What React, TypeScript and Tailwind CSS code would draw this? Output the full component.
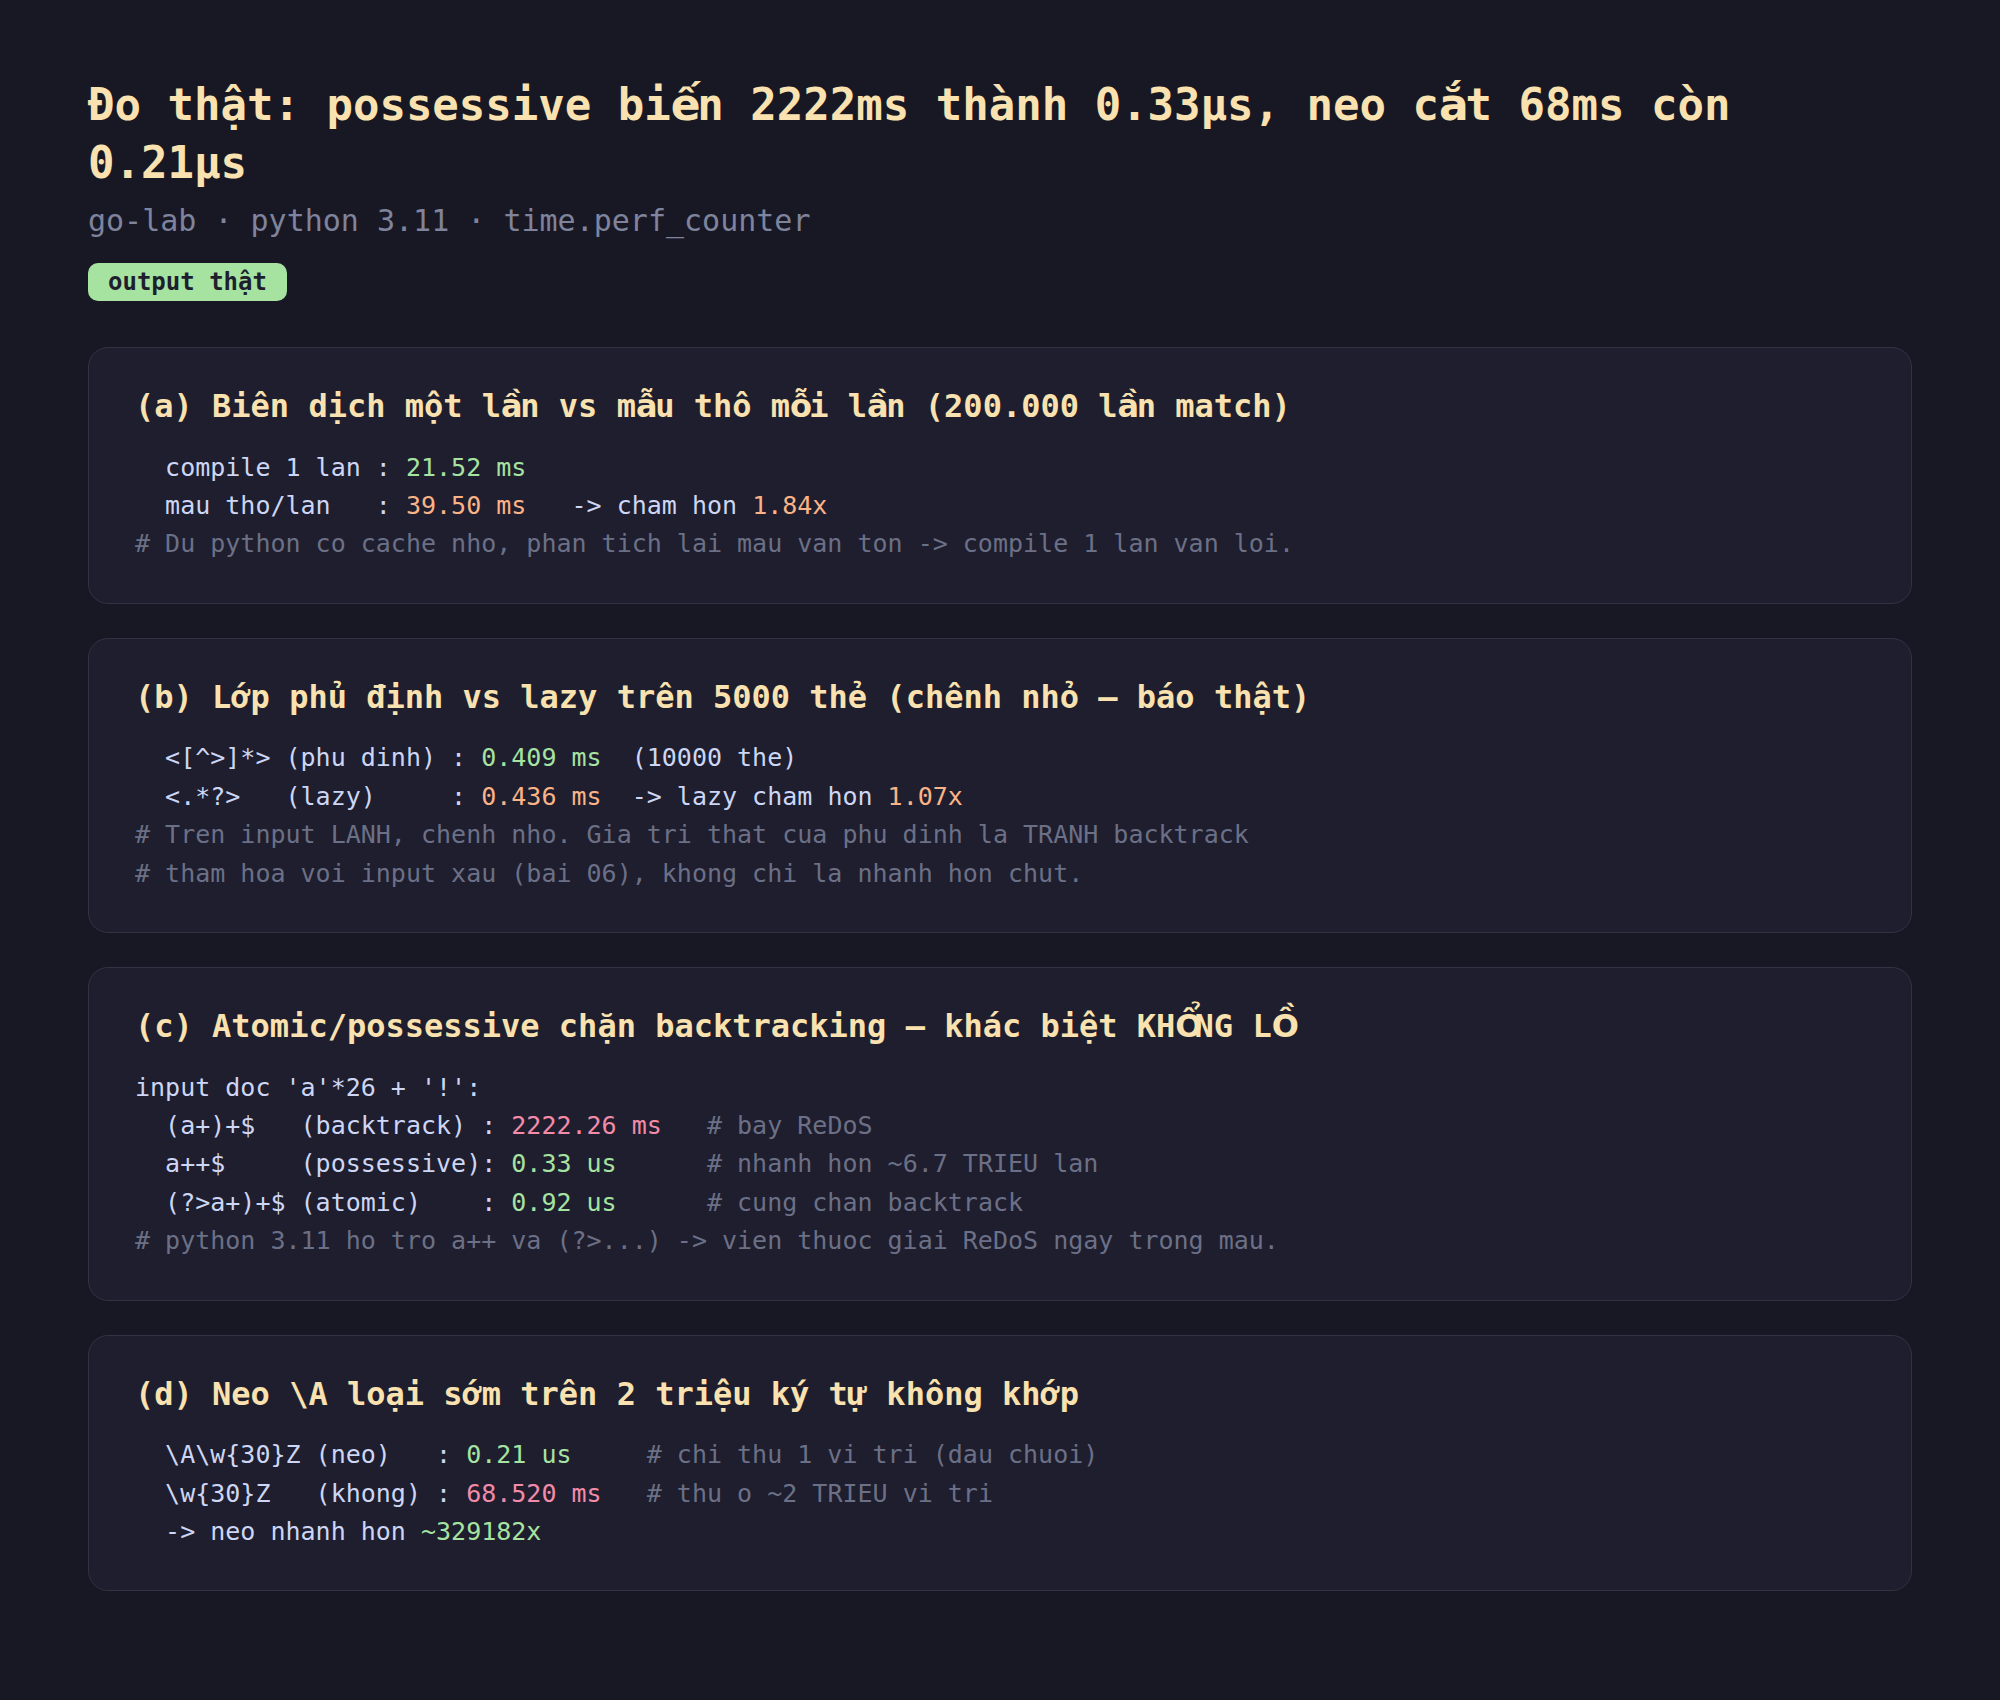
const mono = { fontFamily: '"DejaVu Sans Mono", "Liberation Mono", monospace' }

// DejaVu Sans Mono has no precomposed glyph for these double-accent letters,
// so they get the proportional DejaVu face, kept on the mono grid
const fallbackChars = /([\u1EA4-\u1EAB\u1EAE-\u1EB5\u1EBE-\u1EC5\u1ED0-\u1ED7])/

const Viet = ({ text }: { text: string }) => (
  <>
    {text.split(fallbackChars).map((part, i) =>
      fallbackChars.test(part) ? (
        <span key={i} className="inline-block w-[0.602em] text-center font-['DejaVu_Sans',sans-serif]">
          {part}
        </span>
      ) : (
        part
      )
    )}
  </>
)

type Seg = { t: string; c?: "g" | "o" | "r" | "m" }

const segColor = (c?: string) => {
  switch (c) {
    case "g":
      return "text-[#a6e3a1]" // fast / good
    case "o":
      return "text-[#fab387]" // slower
    case "r":
      return "text-[#f38ba8]" // very slow
    case "m":
      return "text-[#6c7086]" // comment
    default:
      return "text-[#cdd6f4]"
  }
}

const sections: { title: string; lines: Seg[][] }[] = [
  {
    title: "(a) Biên dịch một lần vs mẫu thô mỗi lần (200.000 lần match)",
    lines: [
      [{ t: "  compile 1 lan : " }, { t: "21.52 ms", c: "g" }],
      [{ t: "  mau tho/lan   : " }, { t: "39.50 ms", c: "o" }, { t: "   -> cham hon " }, { t: "1.84x", c: "o" }],
      [{ t: "# Du python co cache nho, phan tich lai mau van ton -> compile 1 lan van loi.", c: "m" }],
    ],
  },
  {
    title: "(b) Lớp phủ định vs lazy trên 5000 thẻ (chênh nhỏ — báo thật)",
    lines: [
      [{ t: "  <[^>]*> (phu dinh) : " }, { t: "0.409 ms", c: "g" }, { t: "  (10000 the)" }],
      [{ t: "  <.*?>   (lazy)     : " }, { t: "0.436 ms", c: "o" }, { t: "  -> lazy cham hon " }, { t: "1.07x", c: "o" }],
      [{ t: "# Tren input LANH, chenh nho. Gia tri that cua phu dinh la TRANH backtrack", c: "m" }],
      [{ t: "# tham hoa voi input xau (bai 06), khong chi la nhanh hon chut.", c: "m" }],
    ],
  },
  {
    title: "(c) Atomic/possessive chặn backtracking — khác biệt KHỔNG LỒ",
    lines: [
      [{ t: "input doc 'a'*26 + '!':" }],
      [{ t: "  (a+)+$   (backtrack) : " }, { t: "2222.26 ms", c: "r" }, { t: "   # bay ReDoS", c: "m" }],
      [{ t: "  a++$     (possessive): " }, { t: "0.33 us", c: "g" }, { t: "      # nhanh hon ~6.7 TRIEU lan", c: "m" }],
      [{ t: "  (?>a+)+$ (atomic)    : " }, { t: "0.92 us", c: "g" }, { t: "      # cung chan backtrack", c: "m" }],
      [{ t: "# python 3.11 ho tro a++ va (?>...) -> vien thuoc giai ReDoS ngay trong mau.", c: "m" }],
    ],
  },
  {
    title: "(d) Neo \\A loại sớm trên 2 triệu ký tự không khớp",
    lines: [
      [{ t: "  \\A\\w{30}Z (neo)   : " }, { t: "0.21 us", c: "g" }, { t: "     # chi thu 1 vi tri (dau chuoi)", c: "m" }],
      [{ t: "  \\w{30}Z   (khong) : " }, { t: "68.520 ms", c: "r" }, { t: "   # thu o ~2 TRIEU vi tri", c: "m" }],
      [{ t: "  -> neo nhanh hon " }, { t: "~329182x", c: "g" }],
    ],
  },
]

export default function App() {
  return (
    <div className="min-h-screen bg-[#181825] px-[88px] pt-[76px] pb-[100px]" style={mono}>
      <h1 className="text-[44px] font-bold leading-[58px] text-[#f9e2af]">
        <Viet text="Đo thật: possessive biến 2222ms thành 0.33µs, neo cắt 68ms còn 0.21µs" />
      </h1>
      <p className="mt-[8px] text-[30px] leading-[42px] text-[#7f849c]">
        go-lab · python 3.11 · time.perf_counter
      </p>
      <div className="mt-[21px] flex">
        <span className="flex h-[38px] items-center rounded-[10px] bg-[#a6e3a1] px-[20px] text-[24px] font-bold text-[#1e1e2e]">
          output thật
        </span>
      </div>

      <div className="mt-[46px] flex flex-col gap-[34px]">
        {sections.map((s, i) => (
          <section
            key={i}
            className="rounded-[20px] border border-[#313244] bg-[#1e1e2e] px-[46px] pt-[38px] pb-[39px]"
          >
            <h2 className="text-[32px] font-bold leading-[41.6px] text-[#f9e2af]">
              <Viet text={s.title} />
            </h2>
            <div className="mt-[21px] text-[25px] leading-[38.4px]">
              {s.lines.map((line, j) => (
                <div key={j} className="whitespace-pre">
                  {line.map((seg, k) => (
                    <span key={k} className={segColor(seg.c)}>
                      {seg.t}
                    </span>
                  ))}
                </div>
              ))}
            </div>
          </section>
        ))}
      </div>
    </div>
  )
}
